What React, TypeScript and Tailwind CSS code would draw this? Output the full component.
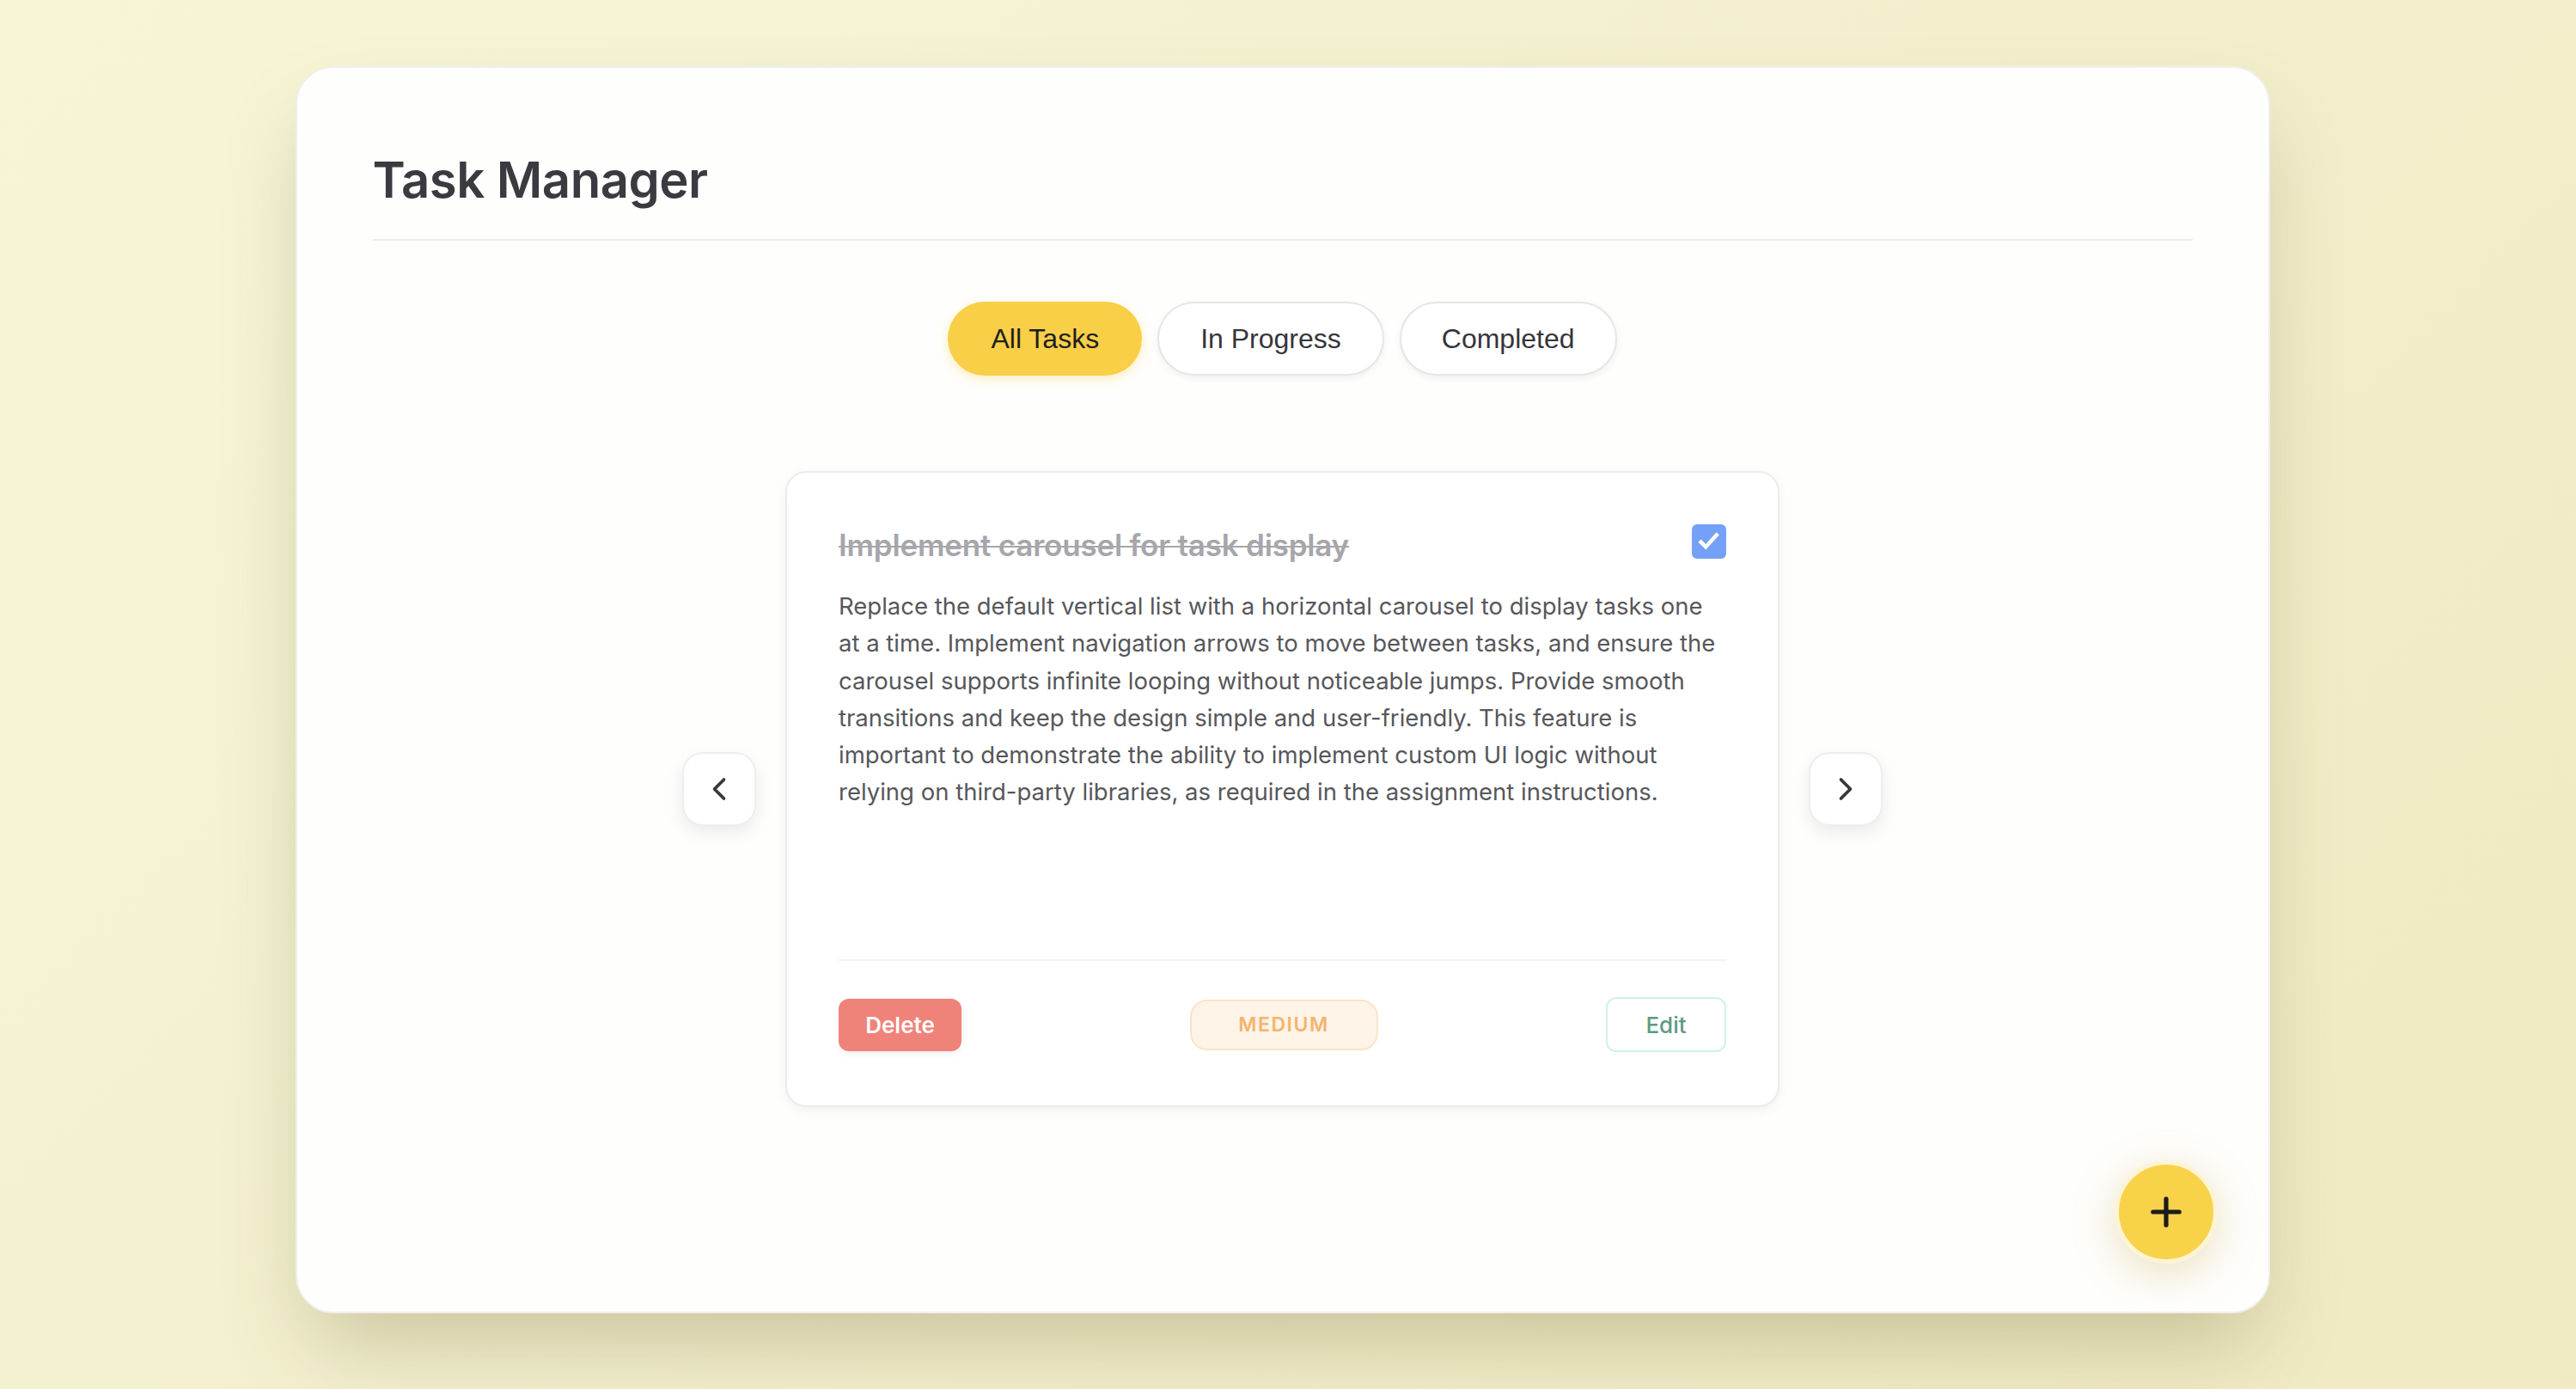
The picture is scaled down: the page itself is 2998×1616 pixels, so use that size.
import React from "react";
import { ChevronLeft, ChevronRight, Plus } from "lucide-react";

const inter = { fontFamily: "Inter, 'Noto Sans', sans-serif" };

export default function App() {
  return (
    <div
      className="min-h-screen w-full bg-[linear-gradient(135deg,#f8f5d6_0%,#f3efcd_50%,#efeac2_100%)] pt-[77px] pr-[13px] pb-[80px]"
      style={inter}
    >
      <div className="relative mx-auto flex h-[1451px] w-[2298px] flex-col rounded-[44px] border-2 border-[#efefee] bg-[#fefefd] px-[88px] pt-[95px] shadow-[0_50px_100px_-20px_rgba(90,80,30,0.28)]">
        {/* Header */}
        <div className="border-b-2 border-[#ebebeb] pb-[34px]">
          <h1 className="text-[58px] font-semibold leading-[70px] tracking-[-0.5px] text-[#3a3a40]">
            Task Manager
          </h1>
        </div>

        {/* Tabs */}
        <div
          className="mt-[71px] flex justify-center gap-[18px]"
          style={{ fontFamily: "'Liberation Sans', Arial, sans-serif" }}
        >
          <button className="h-[86px] rounded-full bg-[#f8cf47] px-[50px] text-[32px] text-[#1e1e22] shadow-[0_4px_14px_rgba(248,207,71,0.35)]">
            All Tasks
          </button>
          <button className="h-[86px] rounded-full border-2 border-[#e6e6e6] bg-white px-[48px] text-[32px] text-[#35353b] shadow-[0_3px_8px_rgba(0,0,0,0.06)]">
            In Progress
          </button>
          <button className="h-[86px] rounded-full border-2 border-[#e6e6e6] bg-white px-[47px] text-[32px] text-[#35353b] shadow-[0_3px_8px_rgba(0,0,0,0.06)]">
            Completed
          </button>
        </div>

        {/* Carousel */}
        <div className="mt-[111px] flex items-center justify-center gap-[34px]">
          <button className="flex h-[86px] w-[86px] items-center justify-center rounded-[24px] border-2 border-[#eeeeee] bg-white shadow-[0_8px_20px_rgba(0,0,0,0.08)]">
            <ChevronLeft size={44} strokeWidth={2} color="#36363c" />
          </button>

          <div className="flex h-[740px] w-[1157px] flex-col rounded-[24px] border-2 border-[#ececec] bg-white p-[60px] pb-[62px] shadow-[0_4px_14px_rgba(0,0,0,0.05)]">
            <div className="flex h-[44px] items-center justify-between">
              <h2 className="mt-[4px] text-[35px] font-semibold leading-[44px] tracking-[-0.2px] text-[#a6a6ab] line-through decoration-[#a6a6ab] decoration-2">
                Implement carousel for task display
              </h2>
              <div className="-mt-[4px] flex h-[40px] w-[40px] items-center justify-center rounded-[6px] bg-[#74a0f7]">
                <svg width="30" height="30" viewBox="0 0 24 24" fill="none">
                  <path
                    d="M4.5 12.5l4.5 4.5 10-11"
                    stroke="white"
                    strokeWidth="3.6"
                    strokeLinecap="square"
                  />
                </svg>
              </div>
            </div>
            <p className="mt-[30px] flex-1 text-[27.5px] leading-[43.3px] text-[#57575b]">
              Replace the default vertical list with a horizontal carousel to
              display tasks one at a time. Implement navigation arrows to move
              between tasks, and ensure the carousel supports infinite looping
              without noticeable jumps. Provide smooth transitions and keep the
              design simple and user-friendly. This feature is important to
              demonstrate the ability to implement custom UI logic without
              relying on third-party libraries, as required in the assignment
              instructions.
            </p>
            <div className="flex items-center justify-between border-t-2 border-[#f3f3f3] pt-[42px]">
              <button className="flex h-[61px] w-[143px] items-center justify-center rounded-[12px] bg-[#ef8379] text-[26px] font-semibold text-white shadow-[0_3px_8px_rgba(0,0,0,0.06)]">
                Delete
              </button>
              <span className="flex h-[59px] w-[219px] items-center justify-center rounded-[20px] border-2 border-[#fbe4c8] bg-[#fdf3e7] text-[23px] font-semibold tracking-[1.5px] text-[#f3b56e]">
                MEDIUM
              </span>
              <button className="flex h-[64px] w-[140px] items-center justify-center rounded-[12px] border-2 border-[#cef3e1] bg-white text-[26px] font-medium text-[#5f9a80]">
                Edit
              </button>
            </div>
          </div>

          <button className="flex h-[86px] w-[86px] items-center justify-center rounded-[24px] border-2 border-[#eeeeee] bg-white shadow-[0_8px_20px_rgba(0,0,0,0.08)]">
            <ChevronRight size={44} strokeWidth={2} color="#36363c" />
          </button>
        </div>

        {/* FAB */}
        <button className="absolute bottom-[56px] right-[59px] flex h-[120px] w-[120px] items-center justify-center rounded-full border-[5px] border-[#fdf4d6] bg-[#f8d34a] shadow-[0_12px_50px_rgba(190,160,50,0.3)]">
          <Plus size={52} strokeWidth={2.4} color="#1c1c1c" />
        </button>
      </div>
    </div>
  );
}
